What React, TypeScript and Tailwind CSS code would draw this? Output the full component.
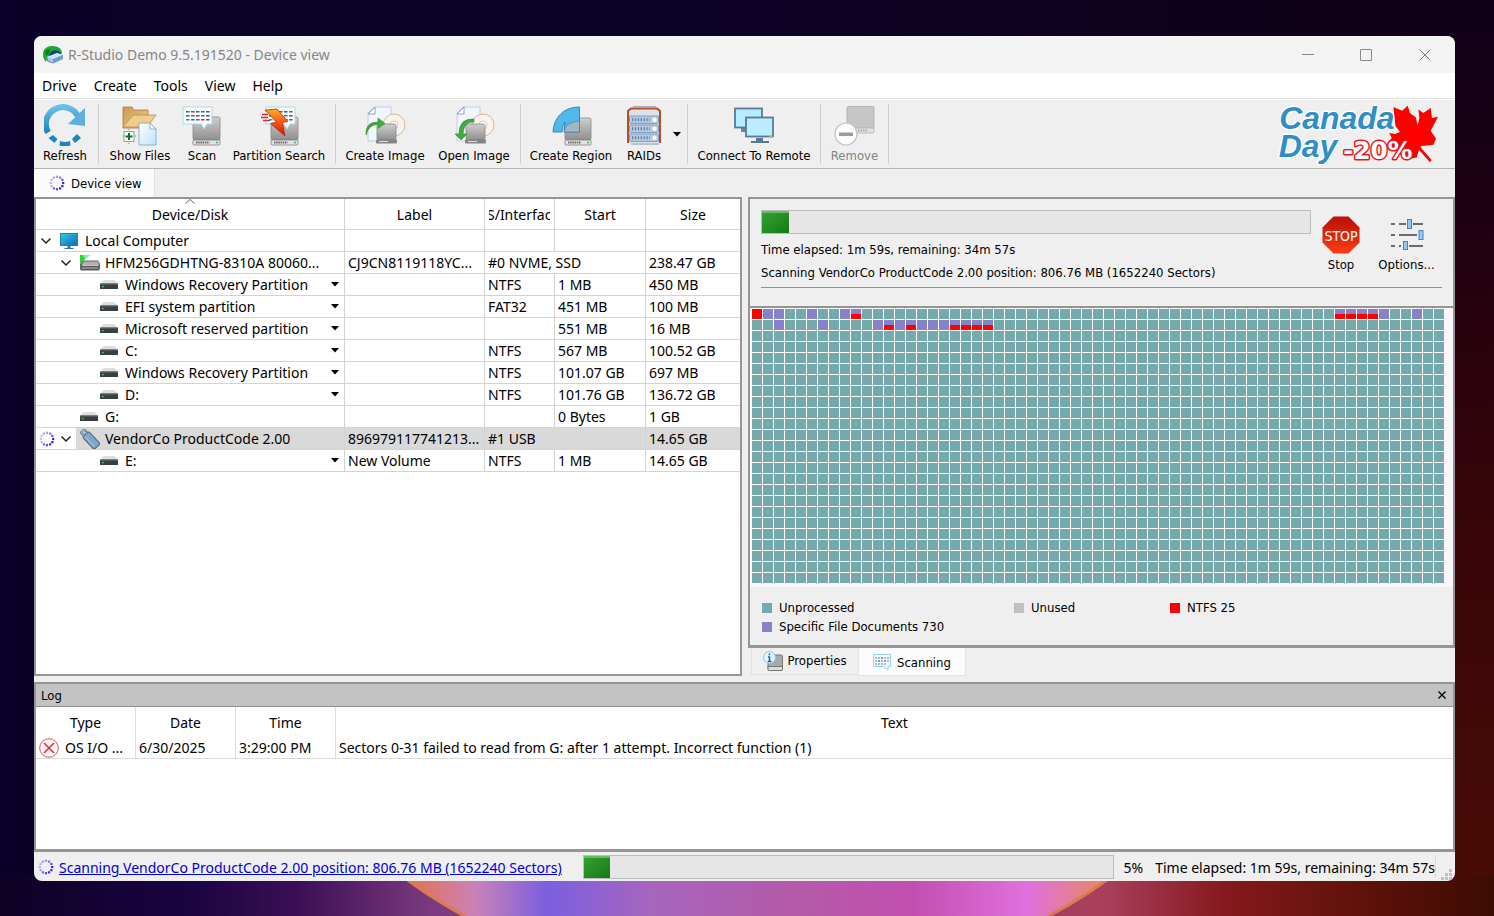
import type { ReactNode } from "react";

const ui = "font-['Noto_Sans','Open_Sans',sans-serif]";
const tahoma = "font-['DejaVu_Sans_Condensed','DejaVu_Sans',sans-serif]";

/* ---------- small icons ---------- */

const spinnerDots = Array.from({ length: 12 }, (_, i) => {
  const a = (i * Math.PI) / 6;
  return { x: 8 + 6.2 * Math.cos(a), y: 8 + 6.2 * Math.sin(a), o: [1, 1, 0.95, 0.85, 0.65, 0.35, 0.3, 0.3, 0.4, 0.45, 0.6, 0.75][i] };
});

function Spinner() {
  return (
    <svg viewBox="0 0 16 16" className="size-4 shrink-0" aria-hidden="true">
      {spinnerDots.map((d, i) => (
        <rect key={i} x={d.x - 1.1} y={d.y - 1.1} width="2.2" height="2.2" fill="#3a1fe0" opacity={d.o} />
      ))}
    </svg>
  );
}

function Chevron() {
  return (
    <svg viewBox="0 0 12 12" className="size-3" aria-hidden="true">
      <path d="M1.500 3.500 6 8l4.500-4.500" fill="none" stroke="#222" strokeWidth="1.500" />
    </svg>
  );
}

function Caret() {
  return (
    <svg viewBox="0 0 8 5" className="h-[5px] w-2" aria-hidden="true">
      <path d="M0 0h8L4 4.500z" fill="#000" />
    </svg>
  );
}

function AppIcon() {
  return (
    <svg viewBox="0 0 20 18" className="h-[18px] w-5 shrink-0" aria-hidden="true">
      <path d="M0 8C0 3 4 0 9 0c5 0 9 2 10 6l-1 3-8-1-6 4-1 4C1 14 0 11 0 8z" fill="#1fa82e" />
      <path d="M2.500 5 7 3 6 8l-3 2z" fill="#0d7a1d" />
      <path d="M8 6c3-3 9-2 10 2L9 11l-3-1z" fill="#173b86" />
      <path d="m4 11 10-4 6 2v4L10 17.500 4 15z" fill="#a9c9ea" />
      <path d="m4 11 10-4 6 2-10 4z" fill="#cfe3f6" />
      <path d="m10 13 10-4v4l-10 4.500z" fill="#6e9dcb" />
      <path d="M4.500 12v3l5 2" fill="none" stroke="#6b88a8" />
    </svg>
  );
}

function MonitorIcon() {
  return (
    <svg viewBox="0 0 18 16" className="h-4 w-[18px] shrink-0" aria-hidden="true">
      <defs>
        <linearGradient id="mon" x1="0" y1="0" x2="1" y2="1">
          <stop offset="0" stopColor="#35c6ee" />
          <stop offset="1" stopColor="#0c6bb5" />
        </linearGradient>
      </defs>
      <rect x=".5" y=".5" width="17" height="12" fill="url(#mon)" stroke="#2a7fa8" />
      <path d="M7.500 13h3v2h3v1h-9v-1h3z" fill="#3d6f94" />
    </svg>
  );
}

function DiskIcon() {
  return (
    <svg viewBox="0 0 20 16" className="h-4 w-5 shrink-0" aria-hidden="true">
      <path d="M0 9 3 5.500h15l2 3v5l-1 2H1l-1-1z" fill="#666" />
      <path d="M2 9 4 6.500h14l1 2v2H2z" fill="#b0b0b0" />
      <path d="M2 12h16M3 14h15" stroke="#444" />
      <path d="M3 10.500h15M2 13h16" stroke="#d8d8d8" strokeWidth=".8" />
      <path d="M0 0h10L4 5 0 9z" fill="#2bd42f" />
      <path d="M3 0h7L5 4z" fill="#8ef08e" />
    </svg>
  );
}

function VolumeIcon() {
  return (
    <svg viewBox="0 0 18 9" className="h-[9px] w-[18px] shrink-0" aria-hidden="true">
      <path d="M3.500 0h11L18 4H0z" fill="#dedede" />
      <rect y="3.500" width="18" height="5.500" rx=".5" fill="#3c3f40" />
      <path d="M.5 4h17" stroke="#6b6e6f" />
      <rect x="2" y="6" width="1.500" height="1.200" fill="#6ee07a" />
    </svg>
  );
}

function UsbIcon() {
  return (
    <svg viewBox="0 0 20 20" className="h-5 w-5 shrink-0" aria-hidden="true">
      <g transform="rotate(-43 10 10)">
        <rect x="7" y="-1.500" width="6" height="5" fill="#b9cbd8" stroke="#6d8494" />
        <path d="M8.500 0v2M11.500 0v2" stroke="#5a6f7e" />
        <rect x="5.800" y="3.500" width="8.400" height="17" rx="2" fill="#7fa8c6" stroke="#45697f" />
        <path d="M8 5v13" stroke="#a9c8dd" />
      </g>
    </svg>
  );
}

/* ---------- toolbar icons ---------- */

function Svg({ children }: { children: ReactNode }) {
  return (
    <svg viewBox="0 0 42 42" className="size-[42px]" aria-hidden="true">
      <defs>
        <linearGradient id="hdd" x1="0" y1="0" x2="0" y2="1">
          <stop offset="0" stopColor="#cfcfcf" />
          <stop offset="1" stopColor="#8f8f8f" />
        </linearGradient>
        <linearGradient id="blue" x1="0" y1="0" x2="0" y2="1">
          <stop offset="0" stopColor="#69bfe6" />
          <stop offset="1" stopColor="#1b83c0" />
        </linearGradient>
        <linearGradient id="folder" x1="0" y1="0" x2="1" y2="1">
          <stop offset="0" stopColor="#c9984f" />
          <stop offset="1" stopColor="#f0cf8c" />
        </linearGradient>
        <linearGradient id="bolt" x1="0" y1="0" x2="0" y2="1">
          <stop offset="0" stopColor="#ffb01c" />
          <stop offset=".5" stopColor="#f8561a" />
          <stop offset="1" stopColor="#c81010" />
        </linearGradient>
        <linearGradient id="page" x1="0" y1="0" x2="1" y2="1">
          <stop offset="0" stopColor="#ffffff" />
          <stop offset="1" stopColor="#bfe2fa" />
        </linearGradient>
      </defs>
      {children}
    </svg>
  );
}

function Hdd({ x, y, w, h }: { x: number; y: number; w: number; h: number }) {
  return (
    <g>
      <rect x={x} y={y} width={w} height={h - 5} rx="1.500" fill="url(#hdd)" stroke="#8c8c8c" strokeWidth=".8" />
      <rect x={x} y={y + h - 5} width={w} height="5" rx="1" fill="#e4e4e4" stroke="#7d7d7d" strokeWidth=".8" />
      <path d={`M${x + 3} ${y + h - 2.5}h${w * 0.5}`} stroke="#666" strokeWidth="2" strokeDasharray="1.500 .7" />
      <circle cx={x + w - 3} cy={y + h - 2.5} r="1" fill="#2fbf52" />
    </g>
  );
}

function Bubble({ x, y }: { x: number; y: number }) {
  const colors = [
    ["#2f6f9c", "#d22", "#2f6f9c", "#2f6f9c", "#2f6f9c"],
    ["#2f6f9c", "#2f6f9c", "#d22", "#2f6f9c", "#d22"],
    ["#2a9a96", "#2f6f9c", "#2f6f9c", "#d22", "#2f6f9c"],
  ];
  return (
    <g>
      <path d={`M${x} ${y}h29v17h-5l-3 5-3-5H${x}z`} fill="#fbfeff" stroke="#a7d5e8" strokeWidth=".9" />
      {colors.map((row, r) =>
        row.map((c, i) => <rect key={`${r}-${i}`} x={x + 3 + i * 5} y={y + 4 + r * 4} width="3.600" height="1.500" fill={c} />),
      )}
    </g>
  );
}

const RefreshIcon = () => (
  <Svg>
    <path d="M4 28.500A17 17 0 0 1 34 12" fill="none" stroke="url(#blue)" strokeWidth="6" />
    <path d="M41 4v18l-17-2z" fill="#5db0dc" />
    <path d="m9 31 4.500 4-3 4-6-5z" fill="#1c86c2" />
    <path d="M16 37q5 2 10 0l.5 4.500q-5.500 1.500-11 0z" fill="#1c86c2" />
    <path d="m33 30 4 4-6 5-3-4z" fill="#1c86c2" />
  </Svg>
);

const ShowFilesIcon = () => (
  <Svg>
    <path d="M4 3h9l2 3h14v18H4z" fill="url(#folder)" stroke="#a87b38" strokeWidth=".8" />
    <path d="M4 23 14 11h23l-9 12z" fill="#efcd8d" stroke="#b98c46" strokeWidth=".8" />
    <path d="M10 25v3M10 37v3M4 32h14" stroke="#777" strokeDasharray="1 1" />
    <rect x="5" y="27.500" width="10" height="10" fill="#f4fff4" stroke="#8a8a8a" strokeWidth=".8" />
    <path d="M10 29v7M6.500 32.500h7" stroke="#17702b" strokeWidth="2" />
    <path d="M20 19h11l6 6v16H20z" fill="url(#page)" stroke="#6fa7ca" strokeWidth=".8" />
    <path d="M31 19v6h6z" fill="#fff" stroke="#6fa7ca" strokeWidth=".8" />
  </Svg>
);

const ScanIcon = () => (
  <Svg>
    <Hdd x={12} y={13} w={27} h={28} />
    <Bubble x={2} y={3} />
  </Svg>
);

const PartitionSearchIcon = () => (
  <Svg>
    <Hdd x={13} y={13} w={27} h={28} />
    <Bubble x={8} y={3} />
    <path d="M10 10.500H4M10 13.500H3M12 16.500H5" stroke="#cf3030" strokeWidth="1.300" />
    <path d="M7 6 19 5l11 12.500-5.500 1L27 32 12.500 19.500l6-1.500z" fill="url(#bolt)" stroke="#c32a12" strokeWidth=".8" />
  </Svg>
);

function ImageBase() {
  return (
    <g>
      <path d="M10 3h17v34H4V9z" fill="#f1f5fd" stroke="#b4c4e8" strokeWidth=".8" />
      <path d="M11 3v7H4z" fill="#fff" stroke="#7887c4" strokeWidth=".8" />
      <circle cx="30" cy="21" r="11" fill="#fbf2e9" stroke="#c9aa8c" strokeWidth=".8" />
      <circle cx="30" cy="21" r="4" fill="#fff" stroke="#d8bda4" strokeWidth=".8" />
      <rect x="13" y="20" width="19" height="16" rx="1.500" fill="url(#hdd)" stroke="#898989" strokeWidth=".8" />
      <rect x="12" y="35.500" width="21" height="4" rx="1" fill="#858585" />
      <path d="M15 37.500h9" stroke="#ddd" />
    </g>
  );
}

const CreateImageIcon = () => (
  <Svg>
    <ImageBase />
    <path d="M2 31q-1-13 12-13v-4l7 5.500-7 5v-4q-9-.5-12 10.500z" fill="#43ab3c" stroke="#2e8c2d" strokeWidth=".6" />
  </Svg>
);

const OpenImageIcon = () => (
  <Svg>
    <ImageBase />
    <path d="M21 15v3q-10-1-11 12h4l-6 6-6-6h4q0-16 15-15z" fill="#43ab3c" stroke="#2e8c2d" strokeWidth=".6" />
  </Svg>
);

const CreateRegionIcon = () => (
  <Svg>
    <Hdd x={15} y={14} w={26} h={27} />
    <path d="M3 28C4 13 14 3 29.500 3v25H14q0-7 1.500-10-3 2-3.500 10z" fill="#52b7ea" stroke="#2d7fb4" strokeWidth=".9" />
    <path d="M14 28q1-10 15.500-11v11z" fill="#a3b7c2" stroke="#3f7899" strokeWidth=".6" />
  </Svg>
);

const RaidsIcon = () => (
  <Svg>
    <path d="M10 2.500h23" stroke="#aaa" />
    <path d="M5 39V7l3-2.500h26l3 2.500v32" fill="#dbe2ea" stroke="#b84b29" strokeWidth="2" />
    {[12, 21, 30].map((y) => (
      <g key={y}>
        <rect x="6.500" y={y} width="29" height="7.500" rx="1" fill="#b3c9e4" stroke="#6484aa" strokeWidth=".7" />
        <path d={`M9 ${y + 3.8}h18`} stroke="#5e7da3" strokeWidth="3" strokeDasharray="1.200 1.700" />
        <circle cx="31.500" cy={y + 3.8} r="2.200" fill="#fff" />
      </g>
    ))}
    <path d="M8 40h28" stroke="#8193a8" />
  </Svg>
);

const ConnectIcon = () => (
  <Svg>
    <path d="M8 24h8v4H8z" fill="#6585a0" />
    <rect x="2" y="4.500" width="27" height="19" fill="#b7ebff" stroke="#587a96" strokeWidth="1.800" />
    <rect x="13" y="13.500" width="27" height="19" fill="#bcecff" stroke="#587a96" strokeWidth="1.800" />
    <path d="M23 34h7v3h6v2H18v-2h5z" fill="#587a96" />
    <path d="M36 33h4" stroke="#b5c94b" strokeWidth="1.500" />
  </Svg>
);

const RemoveIcon = () => (
  <Svg>
    <rect x="13" y="2.500" width="27" height="22" rx="1.500" fill="#c6c6c6" stroke="#a9a9a9" strokeWidth=".8" />
    <rect x="13" y="24" width="27" height="5" rx="1" fill="#e1e1e1" stroke="#b2b2b2" strokeWidth=".8" />
    <path d="M24 26.500h10" stroke="#aaa" strokeWidth="2" strokeDasharray="1.500 1" />
    <circle cx="12" cy="30" r="11" fill="#fdfdfd" stroke="#c4c4c4" strokeWidth="1.200" />
    <rect x="5" y="28.500" width="14" height="3.500" fill="#9b9b9b" />
  </Svg>
);

function CanadaDayLogo() {
  return (
    <svg viewBox="110 215 490 195" className="h-[65px] w-[163px]" role="img" aria-label="Canada Day -20%">
      <path
        d="M460 233 486 244 503 229 510 252 527 264 533 288 538 266 535 240 550 251 572 236 576 266 594 262 583 284 572 304 588 328 580 346 541 351 546 359 575 392 570 399 537 362 530 385 500 390 440 345 455 325 447 311 464 314 480 308 466 290z"
        fill="#f00"
      />
      <g fontWeight="bold" strokeLinejoin="round" paintOrder="stroke">
        <g fontFamily="'Liberation Sans', Arial, sans-serif" fontStyle="italic" fontSize="96" fill="#2f8fc4" stroke="#fff" strokeWidth="7">
          <text x="117" y="299">Canada</text>
          <text x="115" y="383">Day</text>
        </g>
        <text x="309" y="388" fontFamily="'DejaVu Sans', sans-serif" fontSize="74" fill="#fff" stroke="#e8141c" strokeWidth="9">-20%</text>
      </g>
    </svg>
  );
}

function StopIcon() {
  return (
    <svg viewBox="0 0 38 38" className="size-[38px]" aria-hidden="true">
      <defs>
        <linearGradient id="stop" x1="0" y1="0" x2="0" y2="1">
          <stop offset="0" stopColor="#b80f06" />
          <stop offset="1" stopColor="#ff3c12" />
        </linearGradient>
      </defs>
      <path d="M11.500.5h15l11 11v15l-11 11h-15l-11-11v-15z" fill="url(#stop)" />
      <text x="19" y="24.500" textAnchor="middle" fontFamily="'Liberation Sans Narrow','DejaVu Sans Condensed',sans-serif" fontSize="14" fill="#fff">STOP</text>
    </svg>
  );
}

function OptionsIcon() {
  return (
    <svg viewBox="0 0 34 32" className="h-8 w-[34px]" aria-hidden="true">
      <path d="M1 6h4M9 6h7M23 6h10M1 17h4M9 17h18M1 28h4M9 28h2M19 28h14" stroke="#6b6b6b" strokeWidth="2.200" />
      <rect x="17.500" y="1.500" width="4" height="9" fill="#9cc6f5" stroke="#4682c4" />
      <rect x="29" y="12.500" width="4" height="9" fill="#9cc6f5" stroke="#4682c4" />
      <rect x="13.500" y="23.500" width="4" height="8" fill="#9cc6f5" stroke="#4682c4" />
    </svg>
  );
}

function PropertiesIcon() {
  return (
    <svg viewBox="0 0 20 20" className="size-5 shrink-0" aria-hidden="true">
      <rect x="5" y="4" width="14.500" height="15.500" rx="1.500" fill="#a5aaae" stroke="#777" />
      <path d="M5 15.500h14.500V18a1.500 1.500 0 0 1-1.500 1.500H6.500A1.500 1.500 0 0 1 5 18z" fill="#ddd" stroke="#777" />
      <circle cx="6.500" cy="6.500" r="6" fill="#e3f3fd" stroke="#9bbfd4" />
      <path d="M6.500 2.500v1.800M5 6h1.500v4.500M4.800 10.500h3.600" fill="none" stroke="#1c6699" strokeWidth="1.500" />
    </svg>
  );
}

function ScanningIcon() {
  return (
    <svg viewBox="0 0 18 17" className="h-[17px] w-[18px] shrink-0" aria-hidden="true">
      <path d="M.5.5h17v12H15v3.500L11 12.500H.5z" fill="#f0fafe" stroke="#9fcfe6" />
      <path d="M2 4h14M2 7h14M2 10h11" stroke="#4f86ad" strokeWidth="1.200" strokeDasharray="2 1" />
      <path d="M8 4h2M5 7h2M11 7h2" stroke="#d45a66" strokeWidth="1.200" />
    </svg>
  );
}

/* ---------- data ---------- */

type Row = {
  name: string;
  level: 0 | 1 | 2;
  icon: "pc" | "disk" | "vol" | "usb";
  expand?: boolean;
  menu?: boolean;
  selected?: boolean;
  label?: string;
  fs?: string;
  start?: string;
  size?: string;
};

const rows: Row[] = [
  { name: "Local Computer", level: 0, icon: "pc", expand: true },
  { name: "HFM256GDHTNG-8310A 80060...", level: 1, icon: "disk", expand: true, label: "CJ9CN8119118YC...", fs: "#0 NVME, SSD", size: "238.47 GB" },
  { name: "Windows Recovery Partition", level: 2, icon: "vol", menu: true, fs: "NTFS", start: "1 MB", size: "450 MB" },
  { name: "EFI system partition", level: 2, icon: "vol", menu: true, fs: "FAT32", start: "451 MB", size: "100 MB" },
  { name: "Microsoft reserved partition", level: 2, icon: "vol", menu: true, start: "551 MB", size: "16 MB" },
  { name: "C:", level: 2, icon: "vol", menu: true, fs: "NTFS", start: "567 MB", size: "100.52 GB" },
  { name: "Windows Recovery Partition", level: 2, icon: "vol", menu: true, fs: "NTFS", start: "101.07 GB", size: "697 MB" },
  { name: "D:", level: 2, icon: "vol", menu: true, fs: "NTFS", start: "101.76 GB", size: "136.72 GB" },
  { name: "G:", level: 1, icon: "vol", start: "0 Bytes", size: "1 GB" },
  { name: "VendorCo ProductCode 2.00", level: 1, icon: "usb", expand: true, selected: true, label: "896979117741213...", fs: "#1 USB", size: "14.65 GB" },
  { name: "E:", level: 2, icon: "vol", menu: true, label: "New Volume", fs: "NTFS", start: "1 MB", size: "14.65 GB" },
];

const indent = { 0: "w-5", 1: "w-10", 2: "w-[60px]" };
const icons = { pc: <MonitorIcon />, disk: <DiskIcon />, vol: <VolumeIcon />, usb: <UsbIcon /> };

const COLS = 63;
const CELLS = COLS * 25;
const docs = new Set([1, 2, 5, 8, 57, 60, COLS + 2, COLS + 6, COLS + 11, COLS + 13, COLS + 15, COLS + 16, COLS + 17]);
const mixed = new Set([9, 53, 54, 55, 56, COLS + 12, COLS + 14, COLS + 18, COLS + 19, COLS + 20, COLS + 21]);

function cellClass(i: number) {
  if (i === 0) return "bg-[#ff0000]";
  if (docs.has(i)) return "bg-[#8880c8]";
  if (mixed.has(i)) return "bg-[linear-gradient(#8880c8_50%,#ff0000_50%)]";
  return "bg-[#74aaad]";
}

/* ---------- parts ---------- */

function ToolButton({ label, width, icon, disabled }: { label: string; width: string; icon: ReactNode; disabled?: boolean }) {
  return (
    <button type="button" disabled={disabled} className={`flex shrink-0 flex-col items-center pt-1 ${width} ${disabled ? "text-[#838383]" : "text-black"}`}>
      {icon}
      <span className="whitespace-nowrap text-[13px] leading-5">{label}</span>
    </button>
  );
}

const Sep = () => <div className="my-1 w-px shrink-0 bg-[#cfcfcf]" />;

function Bar({ className }: { className: string }) {
  return (
    <div role="progressbar" aria-label="Scan progress" aria-valuenow={5} className={`flex h-6 border border-[#bcbcbc] bg-[#e6e6e6] ${className}`}>
      <div className="w-[5%] border-t-2 border-[#63bd63] bg-linear-to-br from-[#33a133] to-[#137a13]" />
    </div>
  );
}

function DeviceTable() {
  const cell = "h-[22px] border-b border-[#d3d3d3] py-0 pl-[3px] pr-0 whitespace-nowrap";
  const head = "border-b border-[#d3d3d3] px-0 pt-0.5 pb-0 text-center font-normal";
  return (
    <table className={`w-full table-fixed border-separate border-spacing-0 text-left text-[14px] leading-5 ${ui}`}>
      <colgroup>
        <col className="w-[309px]" />
        <col className="w-[140px]" />
        <col className="w-[70px]" />
        <col className="w-[91px]" />
        <col />
      </colgroup>
      <thead>
        <tr>
          <th className={`relative h-[31px] border-r ${head}`}>
            <svg viewBox="0 0 10 5" className="absolute top-0 left-1/2 h-[5px] w-2.5 -translate-x-1/2" aria-hidden="true">
              <path d="M.5 4.500 5 .5l4.500 4" fill="none" stroke="#666" />
            </svg>
            Device/Disk
          </th>
          <th className={`border-r ${head}`}>Label</th>
          <th className={`border-r ${head}`}>
            <div className="mx-1 flex justify-center overflow-hidden whitespace-nowrap"><span>FS/Interface</span></div>
          </th>
          <th className={`border-r ${head}`}>Start</th>
          <th className={head}>Size</th>
        </tr>
      </thead>
      <tbody>
        {rows.map((r, i) => {
          const wide = r.icon === "disk";
          const bg = r.selected ? "bg-[#d9d9d9]" : "";
          return (
            <tr key={i}>
              <td className="h-[22px] border-r border-b border-[#d3d3d3] p-0">
                <div className="flex h-[21px] items-center">
                  <div className={`flex h-full shrink-0 items-center justify-end ${indent[r.level]}`}>
                    {r.selected && <span className="mr-[5px] flex"><Spinner /></span>}
                    {r.expand && (
                      <button type="button" aria-label={`Collapse ${r.name}`} className="mr-1 flex">
                        <Chevron />
                      </button>
                    )}
                  </div>
                  <div className={`flex h-full min-w-0 flex-1 items-center ${bg}`}>
                    <span className="flex w-[29px] shrink-0 items-center pl-1">{icons[r.icon]}</span>
                    <span className="whitespace-nowrap">{r.name}</span>
                    {r.menu && (
                      <button type="button" aria-label={`Menu for ${r.name}`} className="mr-[5px] ml-auto flex">
                        <Caret />
                      </button>
                    )}
                  </div>
                </div>
              </td>
              <td className={`${cell} border-r ${bg}`}>{r.label}</td>
              <td className={`${cell} ${wide || r.selected ? "" : "border-r"} ${bg}`}>
                <div className="w-0 whitespace-nowrap">{r.fs}</div>
              </td>
              <td className={`${cell} border-r ${bg}`}>{r.start}</td>
              <td className={`${cell} ${bg}`}>{r.size}</td>
            </tr>
          );
        })}
      </tbody>
    </table>
  );
}

function ScanPane() {
  return (
    <div className={`flex min-w-0 flex-col text-[13px] ${tahoma}`}>
      <section className="border-t-2 border-r-2 border-b-[3px] border-l-2 border-[#959595] bg-[#efefef]">
        <div className="h-[107px] pr-[11px] pl-[11px]">
          <div className="flex h-[89px] border-b border-[#8f8f8f]">
            <div className="min-w-0 flex-1 pt-[11px]">
              <Bar className="w-full" />
              <p className="mt-1.5 leading-5">Time elapsed: 1m 59s, remaining: 34m 57s</p>
              <p className="mt-[3px] leading-5 whitespace-nowrap">Scanning VendorCo ProductCode 2.00 position: 806.76 MB (1652240 Sectors)</p>
            </div>
            <button type="button" className="flex w-[60px] shrink-0 flex-col items-center pt-[17px]">
              <StopIcon />
              <span className="mt-px leading-5">Stop</span>
            </button>
            <button type="button" className="flex w-[71px] shrink-0 flex-col items-center pt-[19px]">
              <OptionsIcon />
              <span className="mt-[5px] leading-5">Options...</span>
            </button>
          </div>
        </div>
        <div className="border-t-2 border-[#959595] bg-[#fbf6fb] pt-px pr-2 pb-1 pl-0.5">
          <div className="grid w-max grid-cols-[repeat(63,10px)] gap-px bg-white">
            {Array.from({ length: CELLS }, (_, i) => (
              <div key={i} className={`h-2.5 ${cellClass(i)}`} />
            ))}
          </div>
        </div>
        <ul className="grid h-[58px] grid-cols-[252px_156px_1fr] content-start pt-[11px] pl-3 leading-[19px]">
          <li className="flex items-center gap-[7px]"><span className="size-2.5 bg-[#74aaad]" />Unprocessed</li>
          <li className="flex items-center gap-[7px]"><span className="size-2.5 bg-[#c0c0c0]" />Unused</li>
          <li className="flex items-center gap-[7px]"><span className="size-2.5 bg-[#ff0000]" />NTFS 25</li>
          <li className="flex items-center gap-[7px] whitespace-nowrap"><span className="size-2.5 bg-[#8880c8]" />Specific File Documents 730</li>
        </ul>
      </section>
      <div role="tablist" className="flex h-7 items-start pl-[3px]">
        <button type="button" role="tab" className="flex h-[27px] w-[107px] items-center justify-center gap-1 border-b border-l border-[#e2e2e2]">
          <PropertiesIcon />
          Properties
        </button>
        <button type="button" role="tab" aria-selected="true" className="flex h-7 w-[108px] items-center justify-center gap-1.5 border border-t-0 border-[#e4e4e4] bg-[#fcfcfc] pt-0.5">
          <ScanningIcon />
          Scanning
        </button>
      </div>
    </div>
  );
}

function LogPanel() {
  return (
    <section className="mt-1.5 flex flex-1 flex-col border-t-2 border-r-2 border-b-[3px] border-l-2 border-[#959595] bg-white">
      <div className={`flex h-[23px] items-center justify-between border-b border-[#8f8f8f] bg-[#c3c3c3] pr-[5px] pl-[5px] text-[13px] ${tahoma}`}>
        <h2 className="pt-0.5">Log</h2>
        <button type="button" aria-label="Close log" className="flex size-3 items-center justify-center">
          <svg viewBox="0 0 8 8" className="size-2" aria-hidden="true">
            <path d="m.5.5 7 7m0-7-7 7" stroke="#000" strokeWidth="1.400" />
          </svg>
        </button>
      </div>
      <table className={`w-full table-fixed border-separate border-spacing-0 text-left text-[14px] leading-5 ${ui}`}>
        <colgroup>
          <col className="w-[100px]" />
          <col className="w-[100px]" />
          <col className="w-[100px]" />
          <col />
        </colgroup>
        <thead>
          <tr className="h-[31px]">
            <th className="border-r border-[#dcdcdc] p-0 text-center font-normal">Type</th>
            <th className="border-r border-[#dcdcdc] p-0 text-center font-normal">Date</th>
            <th className="border-r border-[#dcdcdc] p-0 text-center font-normal">Time</th>
            <th className="p-0 text-center font-normal">Text</th>
          </tr>
        </thead>
        <tbody>
          <tr className="h-5">
            <td className="border-r border-b border-[#dcdcdc] p-0">
              <div className="flex items-center gap-1.5 pl-[3px]">
                <svg viewBox="0 0 20 20" className="size-5 shrink-0" aria-hidden="true">
                  <circle cx="10" cy="10" r="9.300" fill="#fff8f8" stroke="#e0505c" />
                  <path d="m5 5 10 10m0-10L5 15" stroke="#e03040" strokeWidth="1.600" />
                </svg>
                <span className="whitespace-nowrap">OS I/O ...</span>
              </div>
            </td>
            <td className="border-r border-b border-[#dcdcdc] px-[3px] py-0">6/30/2025</td>
            <td className="border-r border-b border-[#dcdcdc] px-[3px] py-0">3:29:00 PM</td>
            <td className="truncate border-b border-[#dcdcdc] px-[3px] py-0">Sectors 0-31 failed to read from G: after 1 attempt. Incorrect function (1)</td>
          </tr>
        </tbody>
      </table>
    </section>
  );
}

function Wallpaper() {
  return (
    <svg viewBox="0 0 1494 40" preserveAspectRatio="none" className="absolute bottom-0 left-0 h-10 w-full" aria-hidden="true">
      <defs>
        <linearGradient id="ground" gradientUnits="userSpaceOnUse" x1="0" x2="1494" y1="0" y2="0">
          <stop offset="0" stopColor="#0d0124" />
          <stop offset=".13" stopColor="#1b0442" />
          <stop offset=".2" stopColor="#3c0f55" />
          <stop offset=".29" stopColor="#7c3a80" />
          <stop offset=".74" stopColor="#a83f5c" />
          <stop offset=".82" stopColor="#85191d" />
          <stop offset=".92" stopColor="#5c1109" />
          <stop offset="1" stopColor="#3c0c03" />
        </linearGradient>
        <linearGradient id="glow" gradientUnits="userSpaceOnUse" x1="405" x2="1112" y1="0" y2="0">
          <stop offset="0" stopColor="#e8704a" />
          <stop offset=".1" stopColor="#c982b8" />
          <stop offset=".2" stopColor="#7b5fe0" />
          <stop offset=".35" stopColor="#a765bd" />
          <stop offset=".55" stopColor="#b45aa8" />
          <stop offset=".72" stopColor="#c24fb0" />
          <stop offset=".88" stopColor="#e070dd" />
          <stop offset="1" stopColor="#e88a5a" />
        </linearGradient>
      </defs>
      <rect width="1494" height="40" fill="url(#ground)" />
      <path d="M397-4Q430 22 475 46H1037Q1085 22 1117-4z" fill="url(#glow)" stroke="#dc7a50" strokeWidth="3" />
    </svg>
  );
}

const menus = ["Drive", "Create", "Tools", "View", "Help"];

export default function App() {
  return (
    <div className="relative flex min-h-screen flex-col bg-[linear-gradient(90deg,#0b0128,#0d0226_50%,#0f0119_90%,transparent_97.3%),linear-gradient(#0f0119,#1c0012_20%,#3a0508_60%,#4a0d05)] pt-9 pr-[39px] pb-[35px] pl-[34px] text-black">
      <Wallpaper />
      <main className="relative flex flex-1 flex-col overflow-hidden rounded-lg bg-[#efefef]">
        <header className={`flex h-[37px] items-center bg-[#f3f3f3] pl-[9px] text-[14px] text-[#868686] ${ui}`}>
          <AppIcon />
          <h1 className="ml-[5px]">R-Studio Demo 9.5.191520 - Device view</h1>
          <div className="ml-auto flex h-full">
            <button type="button" aria-label="Minimize" className="flex w-[58px] items-center justify-center">
              <svg viewBox="0 0 12 12" className="size-3" aria-hidden="true"><path d="M0 5.500h12" stroke="#888" /></svg>
            </button>
            <button type="button" aria-label="Maximize" className="flex w-[58px] items-center justify-center">
              <svg viewBox="0 0 12 12" className="size-3" aria-hidden="true"><rect x=".5" y=".5" width="11" height="11" rx=".5" fill="none" stroke="#888" /></svg>
            </button>
            <button type="button" aria-label="Close" className="flex w-[60px] items-center justify-center">
              <svg viewBox="0 0 12 12" className="size-3" aria-hidden="true"><path d="m.5.5 11 11m0-11-11 11" stroke="#777" /></svg>
            </button>
          </div>
        </header>
        <nav className={`flex h-[26px] items-center gap-[17px] border-b border-[#e4e4e4] bg-white pl-2 text-[14px] ${ui}`}>
          {menus.map((m) => (
            <button key={m} type="button">{m}</button>
          ))}
        </nav>
        <div className={`flex h-[70px] items-stretch border-t border-b border-t-white border-b-[#b4b4b4] ${tahoma}`}>
          <ToolButton label="Refresh" width="mr-0.5 w-[62px]" icon={<RefreshIcon />} />
          <Sep />
          <ToolButton label="Show Files" width="w-[82px]" icon={<ShowFilesIcon />} />
          <ToolButton label="Scan" width="w-[42px]" icon={<ScanIcon />} />
          <ToolButton label="Partition Search" width="w-28" icon={<PartitionSearchIcon />} />
          <Sep />
          <ToolButton label="Create Image" width="w-[98px]" icon={<CreateImageIcon />} />
          <ToolButton label="Open Image" width="mr-1.5 w-20" icon={<OpenImageIcon />} />
          <Sep />
          <ToolButton label="Create Region" width="w-[100px]" icon={<CreateRegionIcon />} />
          <ToolButton label="RAIDs" width="w-[46px]" icon={<RaidsIcon />} />
          <button type="button" aria-label="RAID types" className="flex w-5 items-center justify-center">
            <Caret />
          </button>
          <Sep />
          <ToolButton label="Connect To Remote" width="w-[132px]" icon={<ConnectIcon />} />
          <Sep />
          <ToolButton label="Remove" width="w-[67px]" icon={<RemoveIcon />} disabled />
          <Sep />
          <a href="#canada-day" className="mt-px mr-[15px] ml-auto"><CanadaDayLogo /></a>
        </div>
        <div role="tablist" className="flex h-7">
          <button type="button" role="tab" aria-selected="true" className={`flex w-[121px] items-center gap-[6px] border-r border-[#e0e0e0] bg-[#fbfbfb] pl-[15px] text-[13px] ${tahoma}`}>
            <Spinner />
            <span className="pt-0.5">Device view</span>
          </button>
        </div>
        <div className="grid grid-cols-[708fr_707fr] gap-1.5">
          <section className="min-w-0 border-2 border-[#959595] bg-white">
            <DeviceTable />
          </section>
          <ScanPane />
        </div>
        <LogPanel />
        <footer className={`flex h-[29px] items-center pl-1 text-[14px] ${ui}`}>
          <Spinner />
          <div className="ml-[5px] min-w-[514px] pt-0.5 whitespace-nowrap">
            <a href="#scan" className="text-[#0000d8] underline">Scanning VendorCo ProductCode 2.00 position: 806.76 MB (1652240 Sectors)</a>
          </div>
          <Bar className="ml-2.5 min-w-0 flex-1" />
          <span className="ml-2.5 pt-0.5">5%</span>
          <span className="ml-3 border-r border-[#dadada] pt-0.5 whitespace-nowrap">Time elapsed: 1m 59s, remaining: 34m 57s</span>
          <svg viewBox="0 0 19 20" className="h-5 w-[19px] self-end" aria-hidden="true">
            <path d="M13 8h3v3h-3zM9 12h3v3H9zM13 12h3v3h-3zM5 16h3v3H5zM9 16h3v3H9zM13 16h3v3h-3z" fill="#c0c0c0" />
          </svg>
        </footer>
      </main>
    </div>
  );
}
